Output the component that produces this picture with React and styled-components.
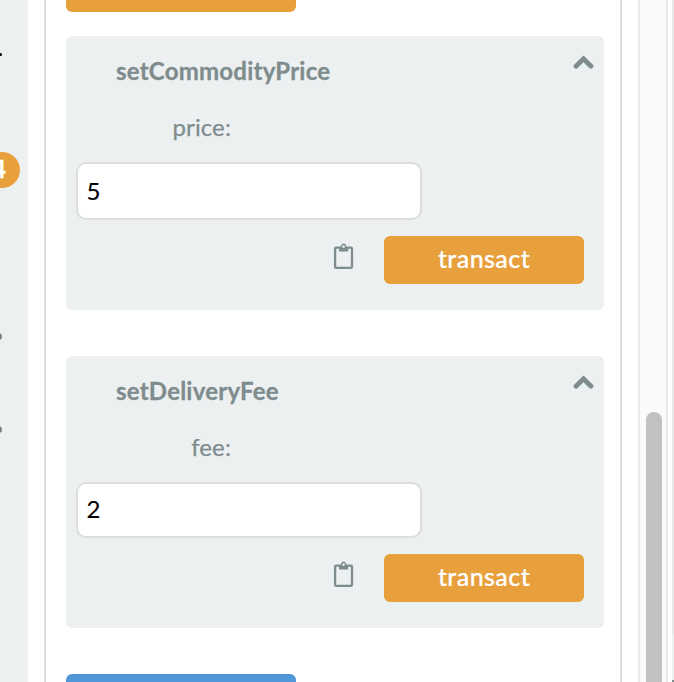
import React from "react";
import styled, { createGlobalStyle } from "styled-components";

const GlobalStyle = createGlobalStyle`
  * { box-sizing: border-box; }
  body {
    margin: 0;
    overflow: hidden;
    background: #fff;
    font-family: Lato, "Liberation Sans", sans-serif;
    font-size: 24px;
    color: #7f8c8d;
  }
`;

const Page = styled.div`
  display: flex;
  width: 674px;
  height: 682px;
  overflow: hidden;
`;

const Sidebar = styled.aside`
  position: relative;
  flex: 0 0 28px;
  background: #ecf0f1;
  overflow: hidden;
`;

const Badge = styled.span`
  position: absolute;
  top: 152px;
  right: 8px;
  width: 52px;
  height: 36px;
  padding-right: 14px;
  border-radius: 18px;
  background: #e8a03c;
  color: #fff;
  font-size: 24px;
  font-weight: 700;
  line-height: 34px;
  text-align: right;
  -webkit-text-stroke: 0.5px currentColor;
`;

const IconEdge = styled.span`
  position: absolute;
  left: ${(p) => 2 - p.$size}px;
  top: ${(p) => p.$top}px;
  width: ${(p) => p.$size}px;
  height: ${(p) => p.$size}px;
  border-radius: 50%;
  background: ${(p) => p.$color};
`;

const Contract = styled.main`
  flex: 0 0 578px;
  display: flex;
  flex-direction: column;
  margin-left: 16px;
  padding-left: 20px;
  padding-right: 16px;
  border: solid #ddd;
  border-width: 0 2px;
`;

const PreviousMethod = styled.button`
  flex: none;
  width: 230px;
  height: 12px;
  padding: 0;
  border: 0;
  border-radius: 0 0 6px 6px;
  background: #e8a03c;
`;

const NextMethod = styled(PreviousMethod)`
  height: 8px;
  margin-top: 46px;
  border-radius: 6px 6px 0 0;
  background: #4f97d7;
`;

const Card = styled.section`
  flex: none;
  display: flex;
  flex-direction: column;
  margin-top: ${(p) => p.$gap}px;
  height: ${(p) => p.$height}px;
  padding: 0 10px;
  border-radius: 6px;
  background: #ecf0f1;
`;

const CardHeader = styled.header`
  display: flex;
  justify-content: space-between;
  height: 72px;
  padding: 19px 0 0 40px;
`;

const Title = styled.h2`
  margin: 0;
  font-size: 24px;
  line-height: 32px;
  font-weight: 700;
  letter-spacing: 0.22px;
  -webkit-text-stroke: 0.3px currentColor;
`;

const Label = styled.label`
  width: 155px;
  height: 54px;
  padding-top: 3px;
  line-height: 32px;
  text-align: right;
  letter-spacing: 0.1px;
  -webkit-text-stroke: 0.25px currentColor;
`;

const Field = styled.input`
  width: 346px;
  height: ${(p) => p.$height}px;
  padding: 0 9px ${(p) => p.$lift}px 8.5px;
  border: 2px solid #ddd;
  border-radius: 10px;
  outline: 0;
  background: #fff;
  color: #000;
  font: 24px Lato, sans-serif;
  -webkit-text-stroke: 0.15px currentColor;
`;

const Actions = styled.div`
  display: flex;
  justify-content: flex-end;
  gap: 28px;
  padding: 16px 10px 0 0;
`;

const Transact = styled.button`
  width: 200px;
  height: 48px;
  padding: 0 0 4px;
  border: 0;
  border-radius: 6px;
  background: #e8a03c;
  color: #fff;
  font: 500 25px Lato, sans-serif;
  letter-spacing: 0.42px;
  -webkit-text-stroke: 0.2px currentColor;
`;

const ChevronSvg = styled.svg`
  flex: none;
  width: 22px;
  height: 16px;
  margin: -1px 0 0 0;
`;

const ClipSvg = styled.svg`
  width: 24px;
  height: 30px;
  margin-top: 6px;
`;

const Scrollbar = styled.div`
  flex: 0 0 30px;
  margin-left: 16px;
  padding: 412px 4px 0 6px;
  border: solid #e8e8e8;
  border-width: 0 2px;
  background: #fafafa;
`;

const Thumb = styled.div`
  width: 16px;
  height: 300px;
  border-radius: 8px;
  background: #c1c1c1;
`;

const Editor = styled.div`
  display: flex;
  flex-direction: column;
  flex: 0 0 2px;
  margin-left: 4px;
  background: #e8e8e8;
`;

const EditorPanel = styled.div`
  height: 48px;
  margin-top: 634px;
  border-bottom: 2px solid #7f8c8d;
  background: #ecf0f1;
`;

const Chevron = () => (
  <ChevronSvg viewBox="0 0 22 16">
    <path
      d="M4 12.2 11.500 4.900l7.500 7.300"
      fill="none"
      stroke="#7f8c8d"
      strokeWidth="4.8"
      strokeLinejoin="miter"
      strokeLinecap="round"
    />
  </ChevronSvg>
);

const Clipboard = () => (
  <ClipSvg viewBox="0 0 24 30">
    <rect x="3.1" y="5.7" width="16.9" height="20.2" rx="1.2" fill="none" stroke="#7f8c8d" strokeWidth="2.3" />
    <path
      d="M7 9.5V7.2C7 6 8 5.600 8.800 5.200 9 2.800 10 1.500 11.600 1.500S14.200 2.800 14.400 5.200C15.300 5.600 16.200 6 16.200 7.200V9.500Z"
      fill="#7f8c8d"
    />
    <circle cx="11.6" cy="4.6" r="1.3" fill="#ecf0f1" />
  </ClipSvg>
);

function MethodCard({ name, param, value, gap, height, fieldHeight, lift }) {
  return (
    <Card $gap={gap} $height={height}>
      <CardHeader>
        <Title>{name}</Title>
        <Chevron />
      </CardHeader>
      <Label htmlFor={name}>{param}:</Label>
      <Field id={name} defaultValue={value} $height={fieldHeight} $lift={lift} />
      <Actions>
        <Clipboard />
        <Transact>transact</Transact>
      </Actions>
    </Card>
  );
}

export default function App() {
  return (
    <>
      <GlobalStyle />
      <Page>
        <Sidebar>
          <IconEdge $top={53} $size={3} $color="#000" />
          <Badge>4</Badge>
          <IconEdge $top={333} $size={7} $color="#7d7d7d" />
          <IconEdge $top={426} $size={7} $color="#7d7d7d" />
        </Sidebar>
        <Contract>
          <PreviousMethod />
          <MethodCard name="setCommodityPrice" param="price" value="5" gap={24} height={274} fieldHeight={58} lift={2} />
          <MethodCard name="setDeliveryFee" param="fee" value="2" gap={46} height={272} fieldHeight={56} lift={4} />
          <NextMethod />
        </Contract>
        <Scrollbar>
          <Thumb />
        </Scrollbar>
        <Editor>
          <EditorPanel />
        </Editor>
      </Page>
    </>
  );
}
